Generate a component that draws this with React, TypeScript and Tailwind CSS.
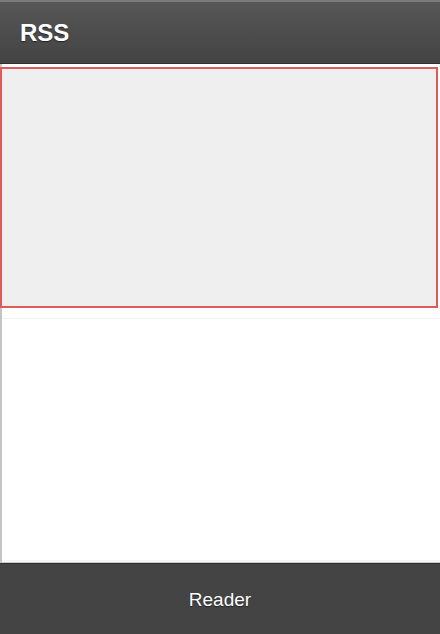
export default function App() {
  return (
    <div className="w-[440px] h-[634px] flex flex-col bg-white overflow-hidden" style={{ fontFamily: '"Liberation Sans", Arial, sans-serif' }}>
      <header className="h-[64px] shrink-0 flex items-center px-5 border-t-2 border-[#7a7a7a] border-b border-b-[#2e2e2e] bg-gradient-to-b from-[#575757] to-[#434343]">
        <span className="text-white font-bold text-[24px] leading-none [text-shadow:0_1px_1px_#222]">RSS</span>
      </header>

      <main className="flex-1 flex flex-col border-l-2 border-[#c4c4c4]">
        <div className="mt-[3px] h-[241px] mr-[2px] -ml-[2px] bg-[#efefef] border-2 border-[#e05a5a]" />
        <div className="mt-[10px] border-t border-[#f0f0f0] flex-1" />
        <div className="h-[3px] border-b border-[#cfcfcf] bg-[#f7f7f7]" />
      </main>

      <footer className="h-[71px] shrink-0 flex items-center justify-center bg-[#444444] border-t border-[#2e2e2e]">
        <span className="text-white text-[19px] leading-none [text-shadow:0_1px_1px_#222]">Reader</span>
      </footer>
    </div>
  )
}
